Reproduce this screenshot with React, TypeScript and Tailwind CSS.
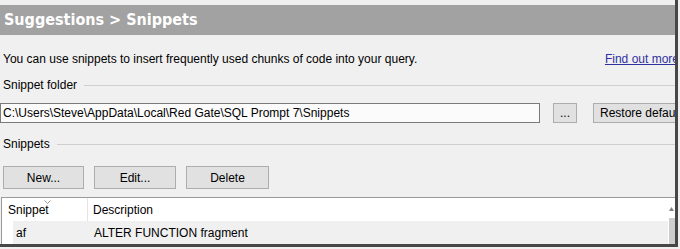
import React from "react";

const ui = { fontFamily: '"Liberation Sans", Arial, sans-serif' };
const head = { fontFamily: '"DejaVu Sans Condensed", "DejaVu Sans", Verdana, sans-serif' };

function GroupLabel({ text }: { text: string }) {
  return (
    <div className="flex items-center h-[16px] pl-[3px] gap-[7px]">
      <span className="text-[12px] leading-[16px] text-black whitespace-nowrap">{text}</span>
      <div className="flex-1 h-px bg-[#cfcfcf]" />
    </div>
  );
}

function Btn({ label, w }: { label: string; w: string }) {
  return (
    <div
      className={`${w} h-full flex items-center justify-center bg-[#e1e1e1] border border-[#adadad] text-[12px] text-black shrink-0`}
    >
      {label}
    </div>
  );
}

export default function App() {
  return (
    <div className="w-[680px] h-[249px] bg-[#f0f0f0] overflow-hidden" style={ui}>
      <div className="w-[678px] h-[247px] border-r-[3px] border-b-[3px] border-[#474747] overflow-hidden flex flex-col">
        <div className="h-[5px] shrink-0" />
        {/* title bar */}
        <div className="h-[30px] shrink-0 bg-[#a2a2a2] flex items-center pl-[4px]">
          <span className="text-white font-bold text-[16px] leading-none" style={head}>
            Suggestions &gt; Snippets
          </span>
        </div>

        <div className="mt-[16px] h-[16px] flex items-center justify-between pl-[3px]">
          <span className="text-[12px] leading-[16px] text-black whitespace-nowrap">
            You can use snippets to insert frequently used chunks of code into your query.
          </span>
          <span className="text-[12px] leading-[16px] text-[#3030a0] underline whitespace-nowrap -mr-[4px]">
            Find out more
          </span>
        </div>

        <div className="mt-[10px]">
          <GroupLabel text="Snippet folder" />
        </div>

        {/* folder row */}
        <div className="mt-[10px] h-[21px] flex items-stretch">
          <div className="w-[540px] shrink-0 border border-[#7a7a7a] bg-[#fbfbfb] flex items-center pl-[2px] text-[12px] text-black whitespace-nowrap overflow-hidden">
            C:\Users\Steve\AppData\Local\Red Gate\SQL Prompt 7\Snippets
          </div>
          <div className="ml-[13px]">
            <Btn label="..." w="w-[24px]" />
          </div>
          <div className="ml-[16px] h-full bg-[#e1e1e1] border border-[#adadad] flex items-center pl-[6px] w-[110px] shrink-0 text-[12px] text-black whitespace-nowrap">
            Restore defaults
          </div>
        </div>

        <div className="mt-[13px]">
          <GroupLabel text="Snippets" />
        </div>

        {/* buttons */}
        <div className="mt-[14px] h-[24px] flex pl-[3px] gap-[10px]">
          <Btn label="New..." w="w-[81px]" />
          <Btn label="Edit..." w="w-[82px]" />
          <Btn label="Delete" w="w-[83px]" />
        </div>

        {/* table */}
        <div className="mt-[8px] ml-[1px] flex-1 bg-white border-t border-l border-[#9a9a9a] flex text-[12px] text-black">
          <div className="flex-1 flex flex-col">
            <div className="h-[23px] flex items-center">
              <div className="w-[86px] h-full flex items-center pl-[6px] border-r border-[#e4e4e4] relative">
                Snippet
                <svg className="absolute left-[42px] top-[2px]" width="7" height="4" viewBox="0 0 7 4">
                  <path d="M0.5 0.5 L3.5 3.5 L6.5 0.5" fill="none" stroke="#9a9a9a" strokeWidth="1" />
                </svg>
              </div>
              <div className="pl-[5px]">Description</div>
            </div>
            <div className="h-[23px] flex items-center ml-[11px] bg-[#f0f0f0]">
              <div className="w-[75px] pl-[3px]">af</div>
              <div className="pl-[6px]">ALTER FUNCTION fragment</div>
            </div>
          </div>
          <div className="w-[7px] flex flex-col items-center">
            <svg className="mt-[9px]" width="5" height="4" viewBox="0 0 5 4">
              <path d="M0 4 L2.5 0 L5 4 Z" fill="#808080" />
            </svg>
            <div className="mt-[7px] w-[6px] flex-1 bg-[#cdcdcd]" />
          </div>
        </div>
      </div>
    </div>
  );
}
